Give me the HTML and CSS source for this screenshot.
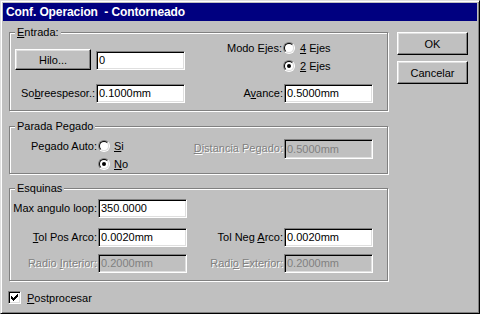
FILE: index.html
```html
<!DOCTYPE html>
<html lang="es">
<head>
<meta charset="utf-8">
<title>Conf. Operacion - Contorneado</title>
<link rel="stylesheet" href="styles.css">
</head>
<body>
<div class="window">
  <div class="titlebar">Conf. Operacion&nbsp; - Contorneado</div>
  <div class="top">
    <div class="main">
      <fieldset class="group entrada">
        <legend><u>E</u>ntrada:</legend>
        <div class="grid">
          <button class="btn hilo">Hilo...</button>
          <div class="field hilo-field">0</div>
          <span class="lbl modo">Modo Ejes:</span>
          <div class="radios">
            <div class="radio-row"><span class="radio"></span><span><u>4</u> Ejes</span></div>
            <div class="radio-row"><span class="radio on"></span><span><u>2</u> Ejes</span></div>
          </div>
          <span class="lbl">So<u>b</u>reespesor.:</span>
          <div class="field">0.1000mm</div>
          <span class="lbl">A<u>v</u>ance:</span>
          <div class="field">0.5000mm</div>
        </div>
      </fieldset>
      <fieldset class="group parada">
        <legend>Parada Pegado</legend>
        <div class="grid">
          <span class="lbl pa">Pegado Auto:</span>
          <div class="radio-row r1"><span class="radio"></span><span><u>S</u>i</span></div>
          <div class="radio-row r2"><span class="radio on"></span><span><u>N</u>o</span></div>
          <span class="lbl dis span2"><u>D</u>istancia Pegado:</span>
          <div class="field disabled span2">0.5000mm</div>
        </div>
      </fieldset>
      <fieldset class="group esquinas">
        <legend>Esquinas</legend>
        <div class="grid">
          <span class="lbl">Max angulo loop:</span>
          <div class="field">350.0000</div>
          <span></span><span></span>
          <span class="lbl"><u>T</u>ol Pos Arco:</span>
          <div class="field">0.0020mm</div>
          <span class="lbl">Tol Neg <u>A</u>rco:</span>
          <div class="field">0.0020mm</div>
          <span class="lbl dis">Radio <u>I</u>nterior:</span>
          <div class="field disabled">0.2000mm</div>
          <span class="lbl dis">Radi<u>o</u> Exterior:</span>
          <div class="field disabled">0.2000mm</div>
        </div>
      </fieldset>
    </div>
    <div class="side">
      <button class="btn act">OK</button>
      <button class="btn act">Cancelar</button>
    </div>
  </div>
  <div class="checkrow">
    <span class="check"><svg width="7" height="7" viewBox="0 0 7 7" shape-rendering="crispEdges"><path d="M6 0h1v3h-1z M5 1h1v3h-1z M4 2h1v3h-1z M3 3h1v3h-1z M2 4h1v3h-1z M1 3h1v3h-1z M0 2h1v3h-1z" fill="#000"/></svg></span>
    <span><u>P</u>ostprocesar</span>
  </div>
</div>
</body>
</html>
```
FILE: styles.css
```css
body {
  margin: 0;
  font: 11px "Liberation Sans", Arial, sans-serif;
  color: #000;
  background: #c0c0c0;
}

.window {
  width: 480px;
  height: 314px;
  box-sizing: border-box;
  border: 1px solid;
  border-color: #dfdfdf #000 #000 #dfdfdf;
  box-shadow: inset 1px 1px 0 #fff, inset -1px -1px 0 #808080;
  padding: 2px;
  background: #c0c0c0;
}

.titlebar {
  height: 18px;
  line-height: 18px;
  background: #000080;
  color: #fff;
  font-weight: bold;
  font-size: 12px;
  letter-spacing: -0.1px;
  padding-left: 3px;
  white-space: nowrap;
}

.top {
  display: flex;
  column-gap: 9px;
  padding-left: 6px;
}

.main {
  width: 379px;
  padding-top: 5px;
  display: flex;
  flex-direction: column;
}

.side {
  padding-top: 11px;
  display: flex;
  flex-direction: column;
  gap: 6px;
}

.btn {
  font: 11px "Liberation Sans", Arial, sans-serif;
  color: #000;
  background: #c0c0c0;
  border: 1px solid;
  border-color: #fff #000 #000 #fff;
  box-shadow: inset -1px -1px 0 #808080, inset 1px 1px 0 #dfdfdf;
  padding: 0;
  margin: 0;
  box-sizing: border-box;
}

.act {
  width: 71px;
  height: 23px;
}

.group {
  margin: 0;
  padding: 0;
  min-width: 0;
  border: 1px solid #808080;
  box-shadow: 1px 1px 0 #fff, inset 1px 1px 0 #fff;
}

.group legend {
  margin-left: 5px;
  padding: 0 2px;
  line-height: 13px;
  background: #c0c0c0;
}

.parada { margin-top: 9px; }
.esquinas { margin-top: 8px; }

.grid {
  display: grid;
}

.lbl {
  text-align: right;
  padding-right: 1px;
  line-height: 19px;
  height: 19px;
  white-space: nowrap;
}

.dis {
  color: #808080;
  text-shadow: 1px 1px 0 #fff;
}

.field {
  height: 19px;
  box-sizing: border-box;
  border: 1px solid;
  border-color: #808080 #fff #fff #808080;
  box-shadow: inset 1px 1px 0 #000, inset -1px -1px 0 #dfdfdf;
  background: #fff;
  padding-left: 2px;
  line-height: 17px;
  white-space: nowrap;
}

.field.disabled {
  background: #c0c0c0;
  color: #808080;
}

/* Entrada */
.entrada .grid {
  grid-template-columns: 86px 89px 99px 89px;
  grid-template-rows: 36px 19px;
  row-gap: 9px;
  padding-bottom: 7px;
}

.hilo {
  width: 76px;
  height: 21px;
  margin-left: 5px;
  align-self: end;
  margin-bottom: 5px;
}

.hilo-field {
  align-self: end;
  margin-bottom: 5px;
}

.modo {
  align-self: start;
  line-height: 18px;
  height: 18px;
  padding-right: 2px;
}

.radios {
  display: flex;
  flex-direction: column;
  margin-left: -1px;
}

.radio-row {
  display: flex;
  align-items: center;
  gap: 5px;
  height: 18px;
  white-space: nowrap;
}

.radio {
  width: 12px;
  height: 12px;
  box-sizing: border-box;
  border-radius: 50%;
  border: 1px solid;
  border-color: #808080 #fff #fff #808080;
  transform: rotate(0deg);
  position: relative;
  flex: none;
}

.radio::before {
  content: "";
  display: block;
  width: 10px;
  height: 10px;
  box-sizing: border-box;
  border-radius: 50%;
  border: 1px solid;
  border-color: #000 #dfdfdf #dfdfdf #000;
  background: #fff;
}

.radio.on::after {
  content: "";
  position: absolute;
  left: 3px;
  top: 3px;
  width: 4px;
  height: 4px;
  border-radius: 50%;
  background: #000;
}

/* Parada */
.parada .grid {
  grid-template-columns: 88px 87px 99px 89px;
  grid-template-rows: 18px 17px;
  padding: 4px 0 1px;
}

.pa {
  grid-column: 1;
  grid-row: 1;
  line-height: 18px;
  height: 18px;
}

.parada .radio-row {
  gap: 4px;
}

.r1 { grid-column: 2; grid-row: 1; }
.r2 { grid-column: 2; grid-row: 2; height: 17px; }

.parada .span2 {
  grid-row: 1 / span 2;
  align-self: start;
  margin-top: 2px;
}

.parada .lbl.span2 { grid-column: 3; }
.parada .field.span2 { grid-column: 4; height: 20px; line-height: 18px; }

/* Esquinas */
.esquinas .grid {
  grid-template-columns: 88px 89px 97px 89px;
  grid-template-rows: 29px 26px 19px;
  align-items: start;
  padding: 4px 0 7px;
}

/* Checkbox */
.checkrow {
  display: flex;
  align-items: center;
  gap: 6px;
  height: 13px;
  margin: 10px 0 0 5px;
}

.check {
  width: 13px;
  height: 13px;
  box-sizing: border-box;
  border: 1px solid;
  border-color: #808080 #fff #fff #808080;
  box-shadow: inset 1px 1px 0 #000, inset -1px -1px 0 #dfdfdf;
  background: #fff;
  padding: 2px;
  flex: none;
}

.check svg {
  display: block;
}
```
